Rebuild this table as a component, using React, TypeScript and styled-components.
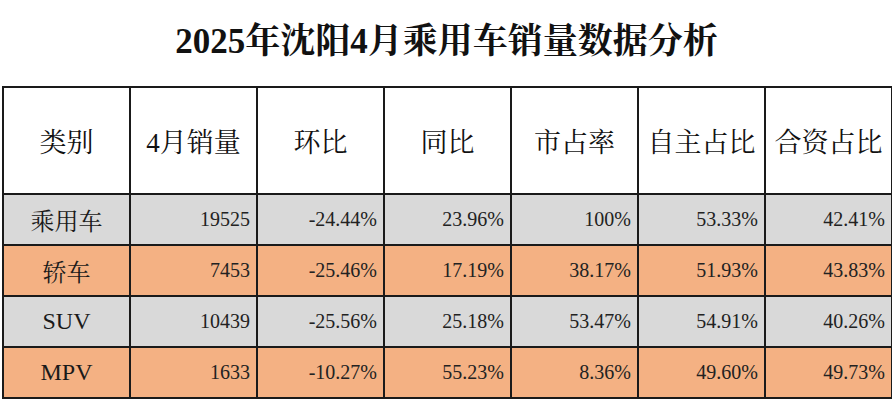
import styled, { createGlobalStyle } from "styled-components"

const serif = `"Liberation Serif", "Noto Serif CJK SC", "Noto Sans CJK SC", serif`

const GlobalStyle = createGlobalStyle`
  html, body {
    margin: 0;
    padding: 0;
    background: #ffffff;
  }
  body {
    font-family: ${serif};
    color: #1a1a1a;
  }
`

type Row = {
  name: string
  sales: string
  mom: string
  yoy: string
  share: string
  own: string
  joint: string
  tone: "gray" | "orange"
}

const headers = ["类别", "4月销量", "环比", "同比", "市占率", "自主占比", "合资占比"]

const rows: Row[] = [
  { name: "乘用车", sales: "19525", mom: "-24.44%", yoy: "23.96%", share: "100%", own: "53.33%", joint: "42.41%", tone: "gray" },
  { name: "轿车", sales: "7453", mom: "-25.46%", yoy: "17.19%", share: "38.17%", own: "51.93%", joint: "43.83%", tone: "orange" },
  { name: "SUV", sales: "10439", mom: "-25.56%", yoy: "25.18%", share: "53.47%", own: "54.91%", joint: "40.26%", tone: "gray" },
  { name: "MPV", sales: "1633", mom: "-10.27%", yoy: "55.23%", share: "8.36%", own: "49.60%", joint: "49.73%", tone: "orange" },
]

const App = () => {
  return (
    <Page>
      <GlobalStyle />
      <Title>2025年沈阳4月乘用车销量数据分析</Title>
      <Table>
        <colgroup>
          {headers.map((h) => (
            <col key={h} />
          ))}
        </colgroup>
        <thead>
          <HeadRow>
            {headers.map((h) => (
              <HeadCell key={h}>{h}</HeadCell>
            ))}
          </HeadRow>
        </thead>
        <tbody>
          {rows.map((r) => (
            <DataRow key={r.name} $tone={r.tone}>
              <NameCell>{r.name}</NameCell>
              <NumCell>{r.sales}</NumCell>
              <NumCell>{r.mom}</NumCell>
              <NumCell>{r.yoy}</NumCell>
              <NumCell>{r.share}</NumCell>
              <NumCell>{r.own}</NumCell>
              <NumCell>{r.joint}</NumCell>
            </DataRow>
          ))}
        </tbody>
      </Table>
    </Page>
  )
}

const Page = styled.div`
  width: 892px;
  height: 400px;
  padding: 0 1px 0 2px;
  box-sizing: border-box;
  overflow: hidden;
`

const Title = styled.h1`
  margin: 0;
  height: 86px;
  display: flex;
  align-items: center;
  justify-content: center;
  padding-bottom: 10px;
  box-sizing: border-box;
  font-family: ${serif};
  font-size: 35px;
  font-weight: 700;
  color: #111;
`

const Table = styled.table`
  width: 889px;
  border-collapse: collapse;
  table-layout: fixed;
  border: 2px solid #1a1a1a;
  font-family: ${serif};
  col {
    width: 127px;
  }
`

const HeadRow = styled.tr`
  height: 107px;
  background: #ffffff;
`

const HeadCell = styled.th`
  border: 2px solid #1a1a1a;
  font-family: ${serif};
  font-size: 27px;
  font-weight: 400;
  color: #111;
  text-align: center;
  padding: 0;
  white-space: nowrap;
`

const DataRow = styled.tr<{ $tone: "gray" | "orange" }>`
  height: 51px;
  background: ${(p) => (p.$tone === "gray" ? "#d9d9d9" : "#f4b183")};
`

const NameCell = styled.td`
  border: 2px solid #1a1a1a;
  font-family: ${serif};
  font-size: 24px;
  text-align: center;
  padding: 0;
  color: #1a1a1a;
`

const NumCell = styled.td`
  border: 2px solid #1a1a1a;
  font-family: ${serif};
  font-size: 20px;
  text-align: right;
  padding: 0 6px 0 0;
  color: #222;
  white-space: nowrap;
`

export default App
